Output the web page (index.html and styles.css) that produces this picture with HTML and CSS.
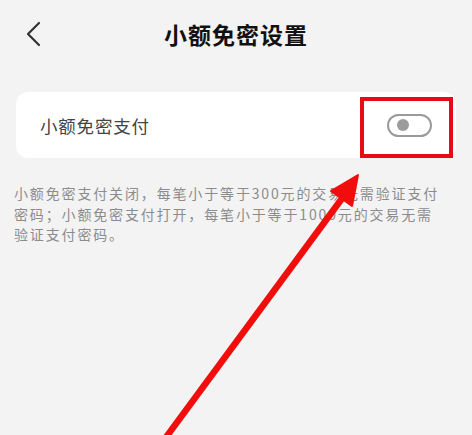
FILE: index.html
```html
<!DOCTYPE html>
<html lang="zh-CN">
<head>
<meta charset="utf-8">
<title>小额免密设置</title>
<link rel="stylesheet" href="styles.css">
</head>
<body>
<div class="page">
  <header class="header">
    <div class="back">
      <svg width="16" height="26" viewBox="0 0 16 26"><polyline points="13,2 2,13 13,24" fill="none" stroke="#333" stroke-width="2.2" stroke-linecap="round" stroke-linejoin="round"/></svg>
    </div>
    <h1 class="title">小额免密设置</h1>
    <div class="spacer"></div>
  </header>
  <section class="card">
    <span class="label">小额免密支付</span>
    <span class="toggle"><span class="knob"></span></span>
  </section>
  <p class="desc"><span class="line">小额免密支付关闭，每笔小于等于300元的交易无需验证支付</span><span class="line">密码；小额免密支付打开，每笔小于等于1000元的交易无需</span><span class="line">验证支付密码。</span></p>
  <div class="highlight"></div>
  <svg class="arrow" width="472" height="435" viewBox="0 0 472 435">
    <line x1="164" y1="440" x2="346" y2="193" stroke="#f20d0d" stroke-width="6.5" stroke-linecap="round"/>
    <polygon points="358,175 331,191 352,206" fill="#f20d0d" stroke="#f20d0d" stroke-width="2" stroke-linejoin="round"/>
  </svg>
</div>
</body>
</html>
```

FILE: styles.css
```css
* { box-sizing: border-box; }
html, body { margin: 0; padding: 0; }
body {
  background: #f3f3f3;
  font-family: "Noto Sans CJK SC", "Noto Sans", sans-serif;
  width: 472px;
  height: 435px;
  overflow: hidden;
}
.page {
  position: relative;
  width: 472px;
  height: 435px;
}
.header {
  height: 68px;
  display: grid;
  grid-template-columns: 1fr auto 1fr;
  align-items: center;
}
.back {
  padding-left: 26px;
  display: flex;
  align-items: center;
  height: 26px;
}
.title {
  margin: 0;
  font-size: 23px;
  font-weight: 700;
  color: #111;
  line-height: 1;
  letter-spacing: 1px;
}
.card {
  margin: 24px 16px 0;
  height: 66px;
  background: #fff;
  border-radius: 12px;
  padding: 0 24px;
  display: flex;
  align-items: center;
  justify-content: space-between;
}
.label {
  font-size: 17.5px;
  color: #444;
  letter-spacing: 0.8px;
}
.toggle {
  width: 45px;
  height: 23px;
  border: 2px solid #9a9a9a;
  border-radius: 12px;
  background: #fff;
  display: flex;
  align-items: center;
  padding-left: 8px;
}
.knob {
  width: 12px;
  height: 12px;
  border-radius: 50%;
  background: #9c9c9c;
}
.desc {
  margin: 25px 0 0;
  padding: 0 14px;
  font-size: 14px;
  line-height: 20.5px;
  letter-spacing: 1.85px;
  color: #8c8c8c;
}
.line { display: block; white-space: nowrap; }
.highlight {
  position: absolute;
  left: 360px;
  top: 97px;
  width: 93px;
  height: 61px;
  border: 4px solid #ea0a16;
}
.arrow {
  position: absolute;
  left: 0;
  top: 0;
}
```
